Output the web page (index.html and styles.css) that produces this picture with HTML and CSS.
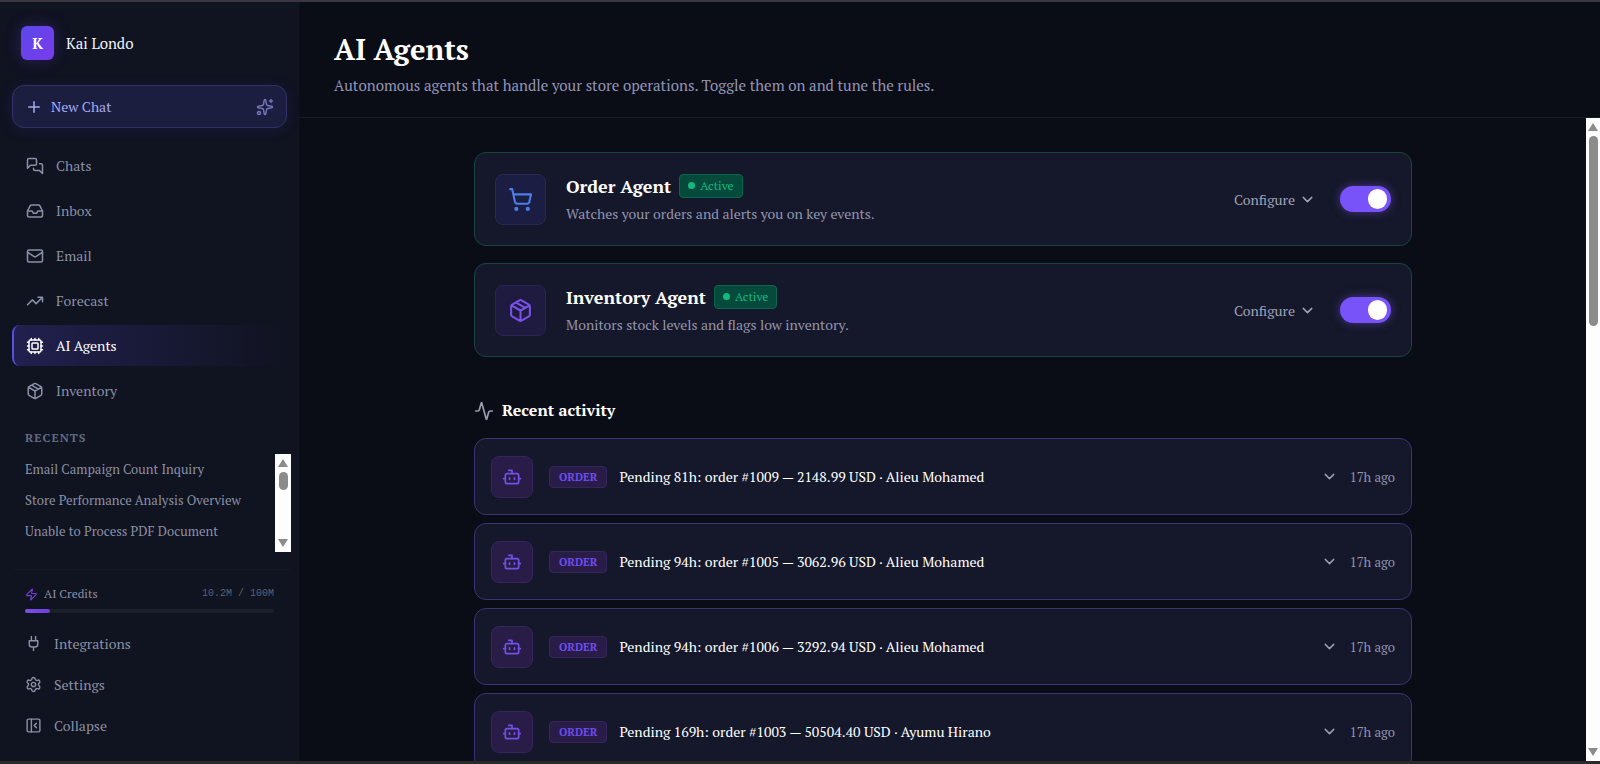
FILE: index.html
```html
<!DOCTYPE html>
<html lang="en">
<head>
  <meta charset="UTF-8" />
  <meta name="viewport" content="width=device-width, initial-scale=1.0" />
  <title>AI Agents</title>
  <link rel="stylesheet" href="styles.css">
</head>
<body>
  <svg class="sprite" aria-hidden="true">
    <symbol id="plus" viewBox="0 0 24 24"><path d="M5 12h14M12 5v14"/></symbol>
    <symbol id="sparkles" viewBox="0 0 24 24"><path d="M11.017 2.814a1 1 0 0 1 1.966 0l1.051 5.558a2 2 0 0 0 1.594 1.594l5.558 1.051a1 1 0 0 1 0 1.966l-5.558 1.051a2 2 0 0 0-1.594 1.594l-1.051 5.558a1 1 0 0 1-1.966 0l-1.051-5.558a2 2 0 0 0-1.594-1.594l-5.558-1.051a1 1 0 0 1 0-1.966l5.558-1.051a2 2 0 0 0 1.594-1.594zM20 2v4M22 4h-4"/><circle cx="4" cy="20" r="2"/></symbol>
    <symbol id="chats" viewBox="0 0 24 24"><path d="M14 9a2 2 0 0 1-2 2H6l-4 4V4a2 2 0 0 1 2-2h8a2 2 0 0 1 2 2zM18 9h2a2 2 0 0 1 2 2v11l-4-4h-6a2 2 0 0 1-2-2v-1"/></symbol>
    <symbol id="inbox" viewBox="0 0 24 24"><path d="M22 12h-6l-2 3h-4l-2-3H2"/><path d="M5.45 5.11 2 12v6a2 2 0 0 0 2 2h16a2 2 0 0 0 2-2v-6l-3.45-6.89A2 2 0 0 0 16.76 4H7.24a2 2 0 0 0-1.79 1.11z"/></symbol>
    <symbol id="mail" viewBox="0 0 24 24"><rect x="2" y="4" width="20" height="16" rx="2"/><path d="m22 7-8.97 5.7a1.94 1.94 0 0 1-2.06 0L2 7"/></symbol>
    <symbol id="trend" viewBox="0 0 24 24"><path d="m22 7-8.5 8.5-5-5L2 17M16 7h6v6"/></symbol>
    <symbol id="cpu" viewBox="0 0 24 24"><rect x="4" y="4" width="16" height="16" rx="2"/><rect x="8" y="8" width="8" height="8" rx="1"/><path d="M12 20v2M12 2v2M17 20v2M17 2v2M7 20v2M7 2v2M2 12h2M2 17h2M2 7h2M20 12h2M20 17h2M20 7h2"/></symbol>
    <symbol id="package" viewBox="0 0 24 24"><path d="M11 21.73a2 2 0 0 0 2 0l7-4A2 2 0 0 0 21 16V8a2 2 0 0 0-1-1.73l-7-4a2 2 0 0 0-2 0l-7 4A2 2 0 0 0 3 8v8a2 2 0 0 0 1 1.73zM12 22V12M3.29 7 12 12l8.71-5M7.5 4.27l9 5.15"/></symbol>
    <symbol id="zap" viewBox="0 0 24 24"><path d="M4 14a1 1 0 0 1-.78-1.63l9.9-10.2a.5.5 0 0 1 .86.46l-1.92 6.02A1 1 0 0 0 13 10h7a1 1 0 0 1 .78 1.63l-9.9 10.2a.5.5 0 0 1-.86-.46l1.92-6.02A1 1 0 0 0 11 14z"/></symbol>
    <symbol id="plug" viewBox="0 0 24 24"><path d="M12 22v-5M9 8V2M15 8V2M18 8v5a4 4 0 0 1-4 4h-4a4 4 0 0 1-4-4V8Z"/></symbol>
    <symbol id="settings" viewBox="0 0 24 24"><path d="M9.671 4.136a2.34 2.34 0 0 1 4.659 0 2.34 2.34 0 0 0 3.319 1.915 2.34 2.34 0 0 1 2.33 4.033 2.34 2.34 0 0 0 0 3.831 2.34 2.34 0 0 1-2.33 4.033 2.34 2.34 0 0 0-3.319 1.915 2.34 2.34 0 0 1-4.659 0 2.34 2.34 0 0 0-3.32-1.915 2.34 2.34 0 0 1-2.33-4.033 2.34 2.34 0 0 0 0-3.831A2.34 2.34 0 0 1 6.35 6.051a2.34 2.34 0 0 0 3.319-1.915"/><circle cx="12" cy="12" r="3"/></symbol>
    <symbol id="collapse" viewBox="0 0 24 24"><rect x="3" y="3" width="18" height="18" rx="2"/><path d="M9 3v18M16 15l-3-3 3-3"/></symbol>
    <symbol id="cart" viewBox="0 0 24 24"><circle cx="8" cy="21" r="1"/><circle cx="19" cy="21" r="1"/><path d="M2.05 2.05h2l2.66 12.42a2 2 0 0 0 2 1.58h9.78a2 2 0 0 0 1.95-1.57l1.65-7.43H5.12"/></symbol>
    <symbol id="activity" viewBox="0 0 24 24"><path d="M22 12h-2.480a2 2 0 0 0-1.930 1.460l-2.350 8.360a.25.25 0 0 1-.48 0L9.240 2.180a.25.25 0 0 0-.48 0l-2.350 8.360A2 2 0 0 1 4.490 12H2"/></symbol>
    <symbol id="bot" viewBox="0 0 24 24"><path d="M12 8V4H8"/><rect x="4" y="8" width="16" height="12" rx="2"/><path d="M2 14h2M20 14h2M15 13v2M9 13v2"/></symbol>
    <symbol id="down" viewBox="0 0 24 24"><path d="m6 9 6 6 6-6"/></symbol>
  </svg>

  <aside class="sidebar">
    <div class="profile">
      <span class="avatar">K</span>
      <span class="name">Kai Londo</span>
    </div>

    <button class="new-chat">
      <svg class="icon"><use href="#plus"/></svg>
      New Chat
      <svg class="icon sparkle"><use href="#sparkles"/></svg>
    </button>

    <nav class="nav">
      <a href="#"><svg class="icon"><use href="#chats"/></svg>Chats</a>
      <a href="#"><svg class="icon"><use href="#inbox"/></svg>Inbox</a>
      <a href="#"><svg class="icon"><use href="#mail"/></svg>Email</a>
      <a href="#"><svg class="icon"><use href="#trend"/></svg>Forecast</a>
      <a href="#" class="active"><svg class="icon"><use href="#cpu"/></svg>AI Agents</a>
      <a href="#"><svg class="icon"><use href="#package"/></svg>Inventory</a>
    </nav>

    <h2 class="recents-title">RECENTS</h2>
    <div class="recents">
      <div class="recents-list">
        <a href="#">Email Campaign Count Inquiry</a>
        <a href="#">Store Performance Analysis Overview</a>
        <a href="#">Unable to Process PDF Document</a>
      </div>
      <div class="scrollbar">
        <span class="arrow up"></span>
        <span class="thumb short"></span>
        <span class="arrow"></span>
      </div>
    </div>

    <div class="sidebar-foot">
      <div class="credits">
        <svg class="icon zap"><use href="#zap"/></svg>
        <span>AI Credits</span>
        <span class="amount">10.2M / 100M</span>
      </div>
      <div class="track"><div class="fill" style="width: 10.2%"></div></div>
      <nav class="foot-nav">
        <a href="#"><svg class="icon"><use href="#plug"/></svg>Integrations</a>
        <a href="#"><svg class="icon"><use href="#settings"/></svg>Settings</a>
        <button><svg class="icon"><use href="#collapse"/></svg>Collapse</button>
      </nav>
    </div>
  </aside>

  <main class="main">
    <header class="page-header">
      <h1>AI Agents</h1>
      <p>Autonomous agents that handle your store operations. Toggle them on and tune the rules.</p>
    </header>

    <div class="scroll-area">
      <div class="content">
        <div class="wrap">
          <section class="agents">
            <article class="agent">
              <span class="agent-icon blue"><svg class="icon"><use href="#cart"/></svg></span>
              <div class="agent-text">
                <div class="agent-head">
                  <h3>Order Agent</h3>
                  <span class="status">Active</span>
                </div>
                <p>Watches your orders and alerts you on key events.</p>
              </div>
              <button class="configure">Configure <svg class="icon"><use href="#down"/></svg></button>
              <input type="checkbox" class="toggle" aria-label="Order Agent" checked>
            </article>
            <article class="agent">
              <span class="agent-icon"><svg class="icon"><use href="#package"/></svg></span>
              <div class="agent-text">
                <div class="agent-head">
                  <h3>Inventory Agent</h3>
                  <span class="status">Active</span>
                </div>
                <p>Monitors stock levels and flags low inventory.</p>
              </div>
              <button class="configure">Configure <svg class="icon"><use href="#down"/></svg></button>
              <input type="checkbox" class="toggle" aria-label="Inventory Agent" checked>
            </article>
          </section>

          <h2 class="activity-title"><svg class="icon"><use href="#activity"/></svg>Recent activity</h2>
          <section class="activity">
            <article class="event">
              <span class="event-icon"><svg class="icon"><use href="#bot"/></svg></span>
              <span class="tag">ORDER</span>
              <p>Pending 81h: order #1009 — 2148.99 USD · Alieu Mohamed</p>
              <svg class="icon chevron"><use href="#down"/></svg>
              <time>17h ago</time>
            </article>
            <article class="event">
              <span class="event-icon"><svg class="icon"><use href="#bot"/></svg></span>
              <span class="tag">ORDER</span>
              <p>Pending 94h: order #1005 — 3062.96 USD · Alieu Mohamed</p>
              <svg class="icon chevron"><use href="#down"/></svg>
              <time>17h ago</time>
            </article>
            <article class="event">
              <span class="event-icon"><svg class="icon"><use href="#bot"/></svg></span>
              <span class="tag">ORDER</span>
              <p>Pending 94h: order #1006 — 3292.94 USD · Alieu Mohamed</p>
              <svg class="icon chevron"><use href="#down"/></svg>
              <time>17h ago</time>
            </article>
            <article class="event">
              <span class="event-icon"><svg class="icon"><use href="#bot"/></svg></span>
              <span class="tag">ORDER</span>
              <p>Pending 169h: order #1003 — 50504.40 USD · Ayumu Hirano</p>
              <svg class="icon chevron"><use href="#down"/></svg>
              <time>17h ago</time>
            </article>
          </section>
        </div>
      </div>
      <div class="scrollbar">
        <span class="arrow up"></span>
        <span class="thumb"></span>
        <span class="arrow"></span>
      </div>
    </div>
  </main>
</body>
</html>
```

FILE: styles.css
```css
* {
  box-sizing: border-box;
}

body {
  margin: 0;
  height: 100vh;
  display: flex;
  overflow: hidden;
  border-top: 2px solid #3b3541;
  border-bottom: 3px solid #29292b;
  background: #0a0d15;
  color: #fff;
  font-family: 'PT Serif', 'Liberation Serif', serif;
  font-size: 14px;
}

h1, h2, h3, p {
  margin: 0;
}

a {
  color: inherit;
  text-decoration: none;
}

button {
  padding: 0;
  border: none;
  background: none;
  color: inherit;
  font: inherit;
  cursor: pointer;
}

.sprite {
  position: absolute;
  width: 0;
  height: 0;
}

.icon {
  width: 18px;
  height: 18px;
  flex-shrink: 0;
  fill: none;
  stroke: currentColor;
  stroke-width: 2;
  stroke-linecap: round;
  stroke-linejoin: round;
}

/* sidebar */
.sidebar {
  width: 300px;
  flex-shrink: 0;
  display: flex;
  flex-direction: column;
  background: #101320;
  border-right: 1px solid #0d101b;
  color: #8a90a5;
}

.profile {
  display: flex;
  align-items: center;
  gap: 12px;
  padding: 24px 21px;
}

.avatar {
  width: 33px;
  height: 34px;
  display: flex;
  align-items: center;
  justify-content: center;
  border-radius: 6px;
  background: linear-gradient(135deg, #5b48e8, #7a3bed);
  box-shadow: 0 0 16px rgba(99, 70, 241, 0.3);
  color: #fff;
  font-size: 15px;
  font-weight: bold;
}

.name {
  color: #f1f2f8;
  font-size: 15px;
}

.new-chat {
  display: flex;
  align-items: center;
  gap: 8px;
  height: 43px;
  margin: 1px 12px 0;
  padding: 0 12px;
  border: 1px solid #342f66;
  border-radius: 12px;
  background: #1c1e40;
  box-shadow: 0 2px 14px rgba(79, 70, 229, 0.14);
  color: #a5abf0;
  flex-shrink: 0;
}

.sparkle {
  margin-left: auto;
  color: #7174b5;
}

.nav {
  display: flex;
  flex-direction: column;
  gap: 4px;
  padding: 17px 13px 0 12px;
}

.nav a {
  display: flex;
  align-items: center;
  gap: 12px;
  height: 41px;
  padding-left: 12px;
  border-left: 2px solid transparent;
  border-radius: 8px;
}

.nav .active {
  border-left-color: #5a4ee0;
  background: linear-gradient(90deg, #21204f, #101320);
  color: #fff;
}

.recents-title {
  padding: 17px 25px 0;
  color: #626a80;
  font-size: 12px;
  line-height: 20px;
  letter-spacing: 1px;
}

.recents {
  flex: 1;
  min-height: 0;
  display: flex;
  justify-content: space-between;
  margin: 6px 8px 17px 25px;
  overflow: hidden;
}

.recents-list a {
  display: block;
  font-size: 13px;
  line-height: 31px;
}

.recents .scrollbar {
  width: 16px;
}

.sidebar-foot {
  margin: 0 9px 0 14px;
  padding: 16px 0 15px 11px;
  border-top: 1px solid #161928;
}

.credits {
  display: flex;
  align-items: center;
  gap: 6px;
  padding-right: 16px;
  font-size: 12px;
  line-height: 16px;
}

.zap {
  width: 13px;
  height: 13px;
  color: #7042dc;
}

.amount {
  margin-left: auto;
  color: #5b6176;
  font-family: 'Liberation Mono', monospace;
  font-size: 10px;
}

.track {
  height: 4px;
  margin: 7px 16px 10px 0;
  border-radius: 2px;
  background: #1c1f2c;
}

.fill {
  height: 4px;
  border-radius: 2px;
  background: linear-gradient(90deg, #7c4fe8, #6d3fdc);
}

.foot-nav a,
.foot-nav button {
  display: flex;
  align-items: center;
  gap: 12px;
  width: 100%;
  height: 41px;
}

.foot-nav .icon {
  width: 17px;
  height: 17px;
}

/* scrollbars */
.scrollbar {
  width: 14px;
  flex-shrink: 0;
  display: flex;
  flex-direction: column;
  align-items: center;
  gap: 5px;
  padding: 5px 0;
  background: #fdfdfd;
}

.arrow {
  border: 5px solid transparent;
  border-top: 8px solid #8b8b8b;
  border-bottom: 0;
  margin-top: auto;
}

.arrow.up {
  border-top: 0;
  border-bottom: 8px solid #8b8b8b;
  margin-top: 0;
}

.thumb {
  width: 9px;
  height: 30%;
  border-radius: 5px;
  background: #8b8b8b;
}

.thumb.short {
  height: 18px;
}

/* main */
.main {
  flex: 1;
  min-width: 0;
  display: flex;
  flex-direction: column;
}

.page-header {
  padding: 28px 34px 19px;
  border-bottom: 1px solid #191c27;
}

.page-header h1 {
  font-size: 29px;
  line-height: 38px;
}

.page-header p {
  margin-top: 4px;
  color: #9294b8;
  font-size: 15px;
  line-height: 26px;
}

.scroll-area {
  flex: 1;
  min-height: 0;
  display: flex;
}

.content {
  flex: 1;
  min-width: 0;
  overflow: hidden;
  padding: 34px 32px;
}

.wrap {
  max-width: 938px;
  margin: 0 auto;
}

.agents {
  display: flex;
  flex-direction: column;
  gap: 17px;
}

.agent {
  display: flex;
  align-items: center;
  height: 94px;
  padding: 0 20px;
  border: 1px solid #1a4540;
  border-radius: 12px;
  background: #15182a;
}

.agent-icon {
  width: 51px;
  height: 51px;
  display: flex;
  align-items: center;
  justify-content: center;
  flex-shrink: 0;
  border: 1px solid #292750;
  border-radius: 8px;
  background: #1e1a40;
  color: #7852e8;
}

.agent-icon.blue {
  border-color: #262950;
  background: #1b1e42;
  color: #4d7de8;
}

.agent-icon .icon {
  width: 25px;
  height: 25px;
}

.agent-text {
  flex: 1;
  padding-left: 20px;
}

.agent-head {
  display: flex;
  align-items: center;
  gap: 8px;
}

.agent-head h3 {
  font-size: 18px;
  line-height: 24px;
}

.status {
  display: flex;
  align-items: center;
  gap: 5px;
  height: 24px;
  padding: 0 8px;
  border: 1px solid #08664d;
  border-radius: 4px;
  background: #064a3b;
  color: #12b981;
  font-size: 12px;
}

.status::before {
  content: '';
  width: 7px;
  height: 7px;
  border-radius: 50%;
  background: #12b981;
}

.agent-text p {
  margin-top: 5px;
  color: #9294ae;
  line-height: 22px;
}

.configure {
  display: flex;
  align-items: center;
  gap: 4px;
  color: #a0a2b8;
}

.configure .icon,
.chevron {
  width: 17px;
  height: 17px;
}

.toggle {
  appearance: none;
  width: 51px;
  height: 26px;
  margin: 0 0 0 24px;
  padding: 3px 4px;
  display: flex;
  border-radius: 13px;
  background: #35374c;
  cursor: pointer;
}

.toggle:checked {
  justify-content: flex-end;
  background: #7953fa;
  box-shadow: 0 0 10px rgba(121, 83, 250, 0.5);
}

.toggle::before {
  content: '';
  width: 19px;
  height: 20px;
  border-radius: 10px;
  background: #fff;
}

.activity-title {
  display: flex;
  align-items: center;
  gap: 8px;
  margin: 40px 0 14px;
  font-size: 16px;
  line-height: 27px;
}

.activity-title .icon {
  width: 20px;
  height: 20px;
  color: #9b9caf;
}

.activity {
  display: flex;
  flex-direction: column;
  gap: 8px;
}

.event {
  display: flex;
  align-items: center;
  height: 77px;
  padding: 0 16px;
  border: 1px solid #3a3474;
  border-radius: 12px;
  background: #15182a;
}

.event-icon {
  width: 42px;
  height: 42px;
  display: flex;
  align-items: center;
  justify-content: center;
  flex-shrink: 0;
  border: 1px solid #34265c;
  border-radius: 8px;
  background: #291d48;
  color: #7350e6;
}

.event-icon .icon {
  width: 20px;
  height: 20px;
}

.tag {
  height: 22px;
  margin: 0 12px 0 16px;
  padding: 0 9px;
  border: 1px solid #34265c;
  border-radius: 4px;
  background: #291d48;
  color: #6f4cf0;
  font-size: 11px;
  font-weight: bold;
  line-height: 20px;
}

.event p {
  flex: 1;
}

.chevron {
  color: #9b9db3;
}

.event time {
  margin-left: 12px;
  color: #9294ae;
  font-size: 13px;
}
```
